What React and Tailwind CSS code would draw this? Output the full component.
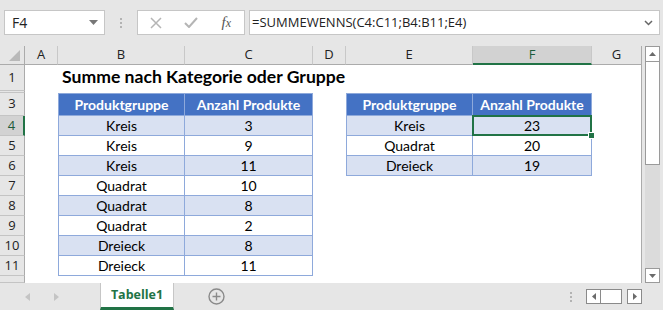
import React from 'react';

const cellFont = { fontFamily: 'Lato, "Open Sans", sans-serif' };

const left = [
  ['Kreis', 3], ['Kreis', 9], ['Kreis', 11], ['Quadrat', 10],
  ['Quadrat', 8], ['Quadrat', 2], ['Dreieck', 8], ['Dreieck', 11],
];
const right = [['Kreis', 23], ['Quadrat', 20], ['Dreieck', 19]];

const SheetRow = ({ num, h, sel, children }) => (
  <div className={`flex shrink-0 ${h}`}>
    <div className={`w-[25px] shrink-0 flex items-center justify-center border-b border-[#c4c4c4] text-[13px] ${sel ? 'bg-[#d2d2d2] border-r-2 border-r-[#217346] text-[#1d5c3a]' : 'bg-[#e6e6e6] border-r border-r-[#ababab] text-[#222]'}`}>
      {num}
    </div>
    <div className="flex flex-1 bg-white" style={cellFont}>{children}</div>
  </div>
);

const Gap = ({ w }) => <div className={`shrink-0 ${w}`} />;

// Tabellenzelle: erste Spalte bekommt linke Kante, Kopfzeile obere Kante
const TCell = ({ w, first, head, band, children, selected }) => (
  <div
    className={`relative shrink-0 flex items-center justify-center border-b border-r border-[#8ea9db] text-[14px] ${w} ${first ? 'border-l' : ''} ${head ? 'border-t bg-[#4472c4] text-white font-bold' : band ? 'bg-[#d9e1f2] text-black' : 'bg-white text-black'} ${selected ? 'z-10' : ''}`}
  >
    {children}
    {selected && (
      <>
        <div className="absolute -left-[1px] -top-[1px] -right-[1px] -bottom-[1px] border-2 border-[#217346]" />
        <div className="absolute -right-[4px] -bottom-[4px] w-[7px] h-[7px] bg-[#217346] border border-white" />
      </>
    )}
  </div>
);

const ColHead = ({ w, label, sel }) => (
  <div className={`shrink-0 flex items-center justify-center border-r border-[#c8c8c8] ${w} ${sel ? 'bg-[#d2d2d2] border-b-2 border-b-[#217346] text-[#1d5c3a]' : 'border-b border-b-[#ababab] text-[#222]'}`}>
    {label}
  </div>
);

export default function App() {
  return (
    <div className="w-[663px] h-[310px] bg-[#e6e6e6] overflow-hidden flex flex-col select-none" style={{ fontFamily: '"Open Sans", "Noto Sans", sans-serif' }}>
      {/* Bearbeitungsleiste */}
      <div className="h-[46px] shrink-0 flex items-start pt-[10px] pl-[4px]">
        <div className="w-[101px] h-[25px] bg-white border border-[#c6c6c6] flex items-center justify-between pl-[7px] pr-[6px] text-[14px] text-[#222]">
          <span>F4</span>
          <svg width="9" height="5" viewBox="0 0 9 5"><path d="M0 0h9L4.5 5z" fill="#777" /></svg>
        </div>
        <div className="w-[32px] h-[25px] flex flex-col items-center justify-center gap-[2px]">
          <div className="w-[2px] h-[2px] bg-[#b3b3b3]" />
          <div className="w-[2px] h-[2px] bg-[#b3b3b3]" />
          <div className="w-[2px] h-[2px] bg-[#b3b3b3]" />
        </div>
        <div className="w-[108px] h-[25px] bg-white border border-[#c6c6c6] flex items-center">
          <div className="w-[36px] flex justify-center">
            <svg width="12" height="12" viewBox="0 0 12 12"><path d="M1 1l10 10M11 1L1 11" stroke="#b5b5b5" strokeWidth="1.5" /></svg>
          </div>
          <div className="w-[36px] flex justify-center">
            <svg width="14" height="11" viewBox="0 0 14 11"><path d="M1 6l4 4 8-9" stroke="#b5b5b5" strokeWidth="2" fill="none" /></svg>
          </div>
          <div className="w-[36px] flex justify-center">
            <span className="text-[15px] italic text-[#555] leading-none" style={{ fontFamily: '"Liberation Serif", serif' }}>
              f<span className="text-[12px]">x</span>
            </span>
          </div>
        </div>
        <div className="ml-[4px] w-[411px] h-[25px] bg-white border border-[#c6c6c6] flex items-center justify-between pl-[2px] pr-[6px] text-[13px] text-[#222]">
          <span>=SUMMEWENNS(C4:C11;B4:B11;E4)</span>
          <svg width="9" height="6" viewBox="0 0 9 6"><path d="M1 1l3.5 3.5L8 1" stroke="#666" strokeWidth="1.5" fill="none" /></svg>
        </div>
      </div>

      {/* Tabellenbereich */}
      <div className="h-[237px] shrink-0 flex">
        <div className="w-[642px] shrink-0 flex flex-col border-r border-b border-[#ababab] bg-white">
          <div className="h-[19px] shrink-0 flex bg-[#e6e6e6] text-[13px]">
            <div className="w-[25px] shrink-0 border-r border-b border-[#ababab] flex items-end justify-end pr-[4px] pb-[3px]">
              <svg width="11" height="11" viewBox="0 0 11 11"><path d="M11 0v11H0z" fill="#b9b9b9" /></svg>
            </div>
            <ColHead w="w-[33px]" label="A" />
            <ColHead w="w-[127px]" label="B" />
            <ColHead w="w-[128px]" label="C" />
            <ColHead w="w-[33px]" label="D" />
            <ColHead w="w-[127px]" label="E" />
            <ColHead w="w-[119px]" label="F" sel />
            <div className="flex-1 flex items-center justify-center border-b border-[#ababab] text-[#222]">G</div>
          </div>

          <SheetRow num="1" h="h-[26px]">
            <Gap w="w-[33px]" />
            <div className="w-[127px] shrink-0 flex items-end pl-[4px] pb-[1px] whitespace-nowrap text-[17.6px] font-bold text-black">
              Summe nach Kategorie oder Gruppe
            </div>
          </SheetRow>
          <SheetRow num="" h="h-[2px]" />

          <SheetRow num="3" h="h-[23px]">
            <Gap w="w-[33px]" />
            <TCell w="w-[127px]" first head>Produktgruppe</TCell>
            <TCell w="w-[128px]" head>Anzahl Produkte</TCell>
            <Gap w="w-[33px]" />
            <TCell w="w-[127px]" first head>Produktgruppe</TCell>
            <TCell w="w-[119px]" head>Anzahl Produkte</TCell>
          </SheetRow>

          {left.map(([name, n], i) => (
            <SheetRow key={i} num={String(i + 4)} h="h-[20px]" sel={i === 0}>
              <Gap w="w-[33px]" />
              <TCell w="w-[127px]" first band={i % 2 === 0}>{name}</TCell>
              <TCell w="w-[128px]" band={i % 2 === 0}>{n}</TCell>
              <Gap w="w-[33px]" />
              {right[i] && (
                <>
                  <TCell w="w-[127px]" first band={i % 2 === 0}>{right[i][0]}</TCell>
                  <TCell w="w-[119px]" band={i % 2 === 0} selected={i === 0}>{right[i][1]}</TCell>
                </>
              )}
            </SheetRow>
          ))}

          <SheetRow num="" h="h-[7px]" />
        </div>

        {/* vertikale Bildlaufleiste */}
        <div className="ml-[3px] w-[15px] flex flex-col bg-[#dbdbdb]">
          <div className="h-[16px] bg-white border border-[#9a9a9a] flex items-center justify-center">
            <svg width="7" height="4" viewBox="0 0 7 4"><path d="M0 4h7L3.5 0z" fill="#6b6b6b" /></svg>
          </div>
          <div className="h-[103px] bg-white border border-t-0 border-[#9a9a9a]" />
          <div className="flex-1" />
          <div className="h-[15px] bg-white border border-[#9a9a9a] flex items-center justify-center">
            <svg width="7" height="4" viewBox="0 0 7 4"><path d="M0 0h7L3.5 4z" fill="#6b6b6b" /></svg>
          </div>
        </div>
      </div>

      {/* Blattregister */}
      <div className="h-[27px] shrink-0 flex items-stretch">
        <div className="w-[100px] shrink-0 flex items-center">
          <svg className="ml-[25px]" width="5" height="8" viewBox="0 0 5 8"><path d="M5 0v8L0 4z" fill="#c4c4c4" /></svg>
          <svg className="ml-[24px]" width="5" height="8" viewBox="0 0 5 8"><path d="M0 0v8l5-4z" fill="#c4c4c4" /></svg>
        </div>
        <div className="w-[74px] shrink-0 bg-white border-l border-r border-[#c6c6c6] border-b-[3px] border-b-[#217346] flex items-center justify-center text-[12.5px] font-bold text-[#217346]">
          Tabelle1
        </div>
        <div className="ml-[34px] flex items-center">
          <svg width="17" height="17" viewBox="0 0 17 17">
            <circle cx="8.5" cy="8.5" r="7.5" stroke="#8a8a8a" strokeWidth="1.4" fill="none" />
            <path d="M8.5 4.5v8M4.5 8.5h8" stroke="#8a8a8a" strokeWidth="1.4" />
          </svg>
        </div>
        <div className="flex-1" />
        <div className="flex flex-col items-center justify-center gap-[2px] mr-[14px]">
          <div className="w-[2px] h-[2px] bg-[#b3b3b3]" />
          <div className="w-[2px] h-[2px] bg-[#b3b3b3]" />
          <div className="w-[2px] h-[2px] bg-[#b3b3b3]" />
        </div>
        <div className="flex items-center mr-[21px]">
          <div className="w-[15px] h-[15px] bg-white border border-[#8a8a8a] flex items-center justify-center">
            <svg width="4" height="7" viewBox="0 0 4 7"><path d="M4 0v7L0 3.5z" fill="#6b6b6b" /></svg>
          </div>
          <div className="w-[21px] h-[15px] bg-white border border-l-0 border-[#8a8a8a]" />
          <div className="ml-[5px] w-[15px] h-[15px] bg-white border border-[#8a8a8a] flex items-center justify-center">
            <svg width="4" height="7" viewBox="0 0 4 7"><path d="M0 0v7l4-3.5z" fill="#6b6b6b" /></svg>
          </div>
        </div>
      </div>
    </div>
  );
}
